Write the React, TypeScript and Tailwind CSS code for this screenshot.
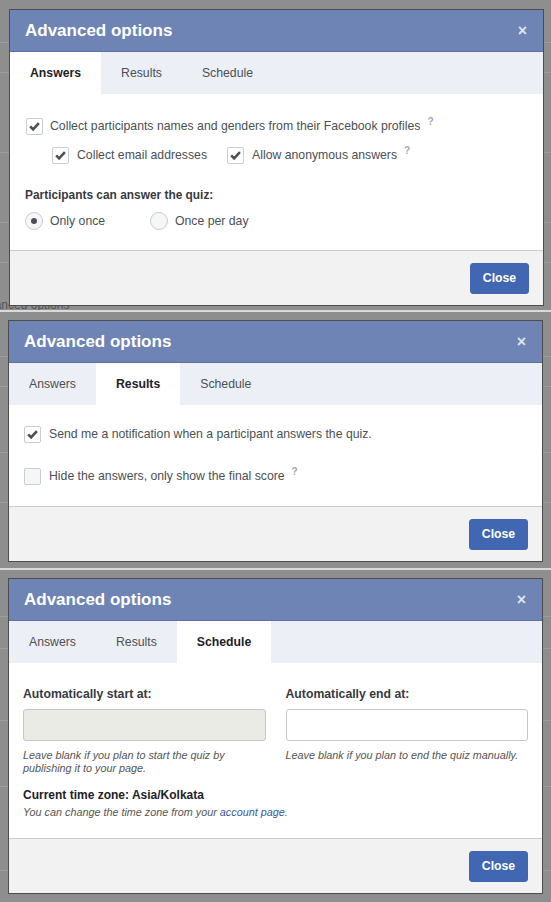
import React from "react";

type TabName = "Answers" | "Results" | "Schedule";
const TABS: TabName[] = ["Answers", "Results", "Schedule"];

function Checkbox({ checked }: { checked: boolean }) {
  return (
    <span
      className={`flex h-[17px] w-[17px] shrink-0 items-center justify-center rounded-[2px] border border-[#c9cdd3] ${
        checked ? "bg-white" : "bg-[#f5f6f7]"
      }`}
    >
      {checked && (
        <svg width="15" height="15" viewBox="0 0 15 15" className="block">
          <path d="M3.2 7.4 L6.1 10.3 L11.9 4.2" fill="none" stroke="#4b4f56" strokeWidth="2.6" />
        </svg>
      )}
    </span>
  );
}

function Radio({ checked }: { checked: boolean }) {
  return (
    <span className="flex h-[18px] w-[18px] shrink-0 items-center justify-center rounded-full border border-[#c9cdd3] bg-[#f5f6f7]">
      {checked && <span className="h-[6px] w-[6px] rounded-full bg-[#4b4f56]" />}
    </span>
  );
}

function Q() {
  return <span className="ml-[7px] -translate-y-[5px] text-[10px] font-bold text-[#a3a8b0]">?</span>;
}

function Dialog({ active, children }: { active: TabName; children: React.ReactNode }) {
  return (
    <div className="relative z-10 w-[535px] border border-[#4d4d4d] bg-white">
      <div className="flex h-[42px] items-center justify-between border-b border-[#5d72a3] bg-[#6d84b4] pl-[15px] pr-[16px]">
        <span className="text-[17px] font-bold text-white">Advanced options</span>
        <span className="text-[16px] font-bold leading-none text-[#dfe5f0]">×</span>
      </div>
      <div className="flex h-[42px] bg-[#eceff5]">
        {TABS.map((t) => (
          <div
            key={t}
            className={`flex items-center px-[20px] text-[12.25px] ${
              t === active ? "bg-white font-bold text-[#1d2129]" : "text-[#4b4f56]"
            }`}
          >
            {t}
          </div>
        ))}
      </div>
      {children}
      <div className="flex h-[55px] items-center justify-end border-t border-[#cccccc] bg-[#f2f2f2] pr-[14px]">
        <button className="h-[31px] w-[59px] rounded-[3px] border border-[#4267b2] bg-[#4267b2] text-[12.25px] font-bold text-white">
          Close
        </button>
      </div>
    </div>
  );
}

function Lines({ tops }: { tops: number[] }) {
  return (
    <>
      {tops.map((t) => (
        <div key={t} className="absolute left-0 right-0 h-px bg-[#9c9c9c]" style={{ top: t }} />
      ))}
    </>
  );
}

export default function App() {
  return (
    <div className="h-[902px] w-[551px] overflow-hidden bg-[#8e8e8e] font-['Liberation_Sans',Arial,sans-serif] text-[12.25px] text-[#4b4f56]">
      {/* Panel 1 */}
      <div className="relative h-[310px] overflow-hidden bg-[#8e8e8e] pl-[9px] pt-[9px]">
        <Lines tops={[42, 72, 152, 222, 262]} />
        <div className="absolute left-[-26px] top-[298px] text-[12px] leading-[14px] text-[#555]">Advanced options</div>
        <Dialog active="Answers">
          <div className="h-[156px] px-[15px] pt-[23px]">
            <div className="flex items-center pl-[1px]">
              <Checkbox checked />
              <span className="ml-[7px]">Collect participants names and genders from their Facebook profiles</span>
              <Q />
            </div>
            <div className="mt-[11px] flex items-center pl-[27px]">
              <Checkbox checked />
              <span className="ml-[8px]">Collect email addresses</span>
              <span className="ml-[20px]">
                <Checkbox checked />
              </span>
              <span className="ml-[8px]">Allow anonymous answers</span>
              <Q />
            </div>
            <div className="mt-[22px] text-[11.9px] font-bold text-[#373a40]">Participants can answer the quiz:</div>
            <div className="mt-[7px] flex items-center">
              <div className="flex w-[125px] items-center">
                <Radio checked />
                <span className="ml-[7px]">Only once</span>
              </div>
              <div className="flex items-center">
                <Radio checked={false} />
                <span className="ml-[7px]">Once per day</span>
              </div>
            </div>
          </div>
        </Dialog>
      </div>
      <div className="h-[2px] bg-[#dadada]" />

      {/* Panel 2 */}
      <div className="relative h-[256px] overflow-hidden bg-[#8e8e8e] pl-[8px] pt-[8px]">
        <Lines tops={[44, 74, 140, 190]} />
        <Dialog active="Results">
          <div className="h-[101px] px-[15px] pt-[20px]">
            <div className="flex items-center">
              <Checkbox checked />
              <span className="ml-[8px]">Send me a notification when a participant answers the quiz.</span>
            </div>
            <div className="mt-[24px] flex items-center">
              <Checkbox checked={false} />
              <span className="ml-[8px]">Hide the answers, only show the final score</span>
              <Q />
            </div>
          </div>
        </Dialog>
      </div>
      <div className="h-[2px] bg-[#dadada]" />

      {/* Panel 3 */}
      <div className="relative h-[332px] overflow-hidden bg-[#8e8e8e] pl-[8px] pt-[8px]">
        <Lines tops={[46, 78, 150, 216, 300]} />
        <Dialog active="Schedule">
          <div className="h-[175px] px-[14px] pt-[23px]">
            <div className="grid grid-cols-2 gap-x-[20px]">
              <div>
                <div className="font-bold leading-[16px] text-[#373a40]">Automatically start at:</div>
                <div className="mt-[7px] h-[32px] rounded-[3px] border border-[#c6c6c6] bg-[#ebebe6]" />
                <div className="mt-[8px] text-[10.8px] italic leading-[13px] text-[#555]">
                  Leave blank if you plan to start the quiz by
                  <br />
                  publishing it to your page.
                </div>
              </div>
              <div>
                <div className="font-bold leading-[16px] text-[#373a40]">Automatically end at:</div>
                <div className="mt-[7px] h-[32px] rounded-[3px] border border-[#c6c6c6] bg-white" />
                <div className="mt-[8px] text-[10.8px] italic leading-[13px] text-[#555]">
                  Leave blank if you plan to end the quiz manually.
                </div>
              </div>
            </div>
            <div className="mt-[12px] text-[12px] font-bold leading-[16px] text-[#1d2129]">Current time zone: Asia/Kolkata</div>
            <div className="mt-[3px] text-[10.8px] italic leading-[13px] text-[#555]">
              You can change the time zone from your <span className="text-[#365899]">account page</span>.
            </div>
          </div>
        </Dialog>
      </div>
    </div>
  );
}
